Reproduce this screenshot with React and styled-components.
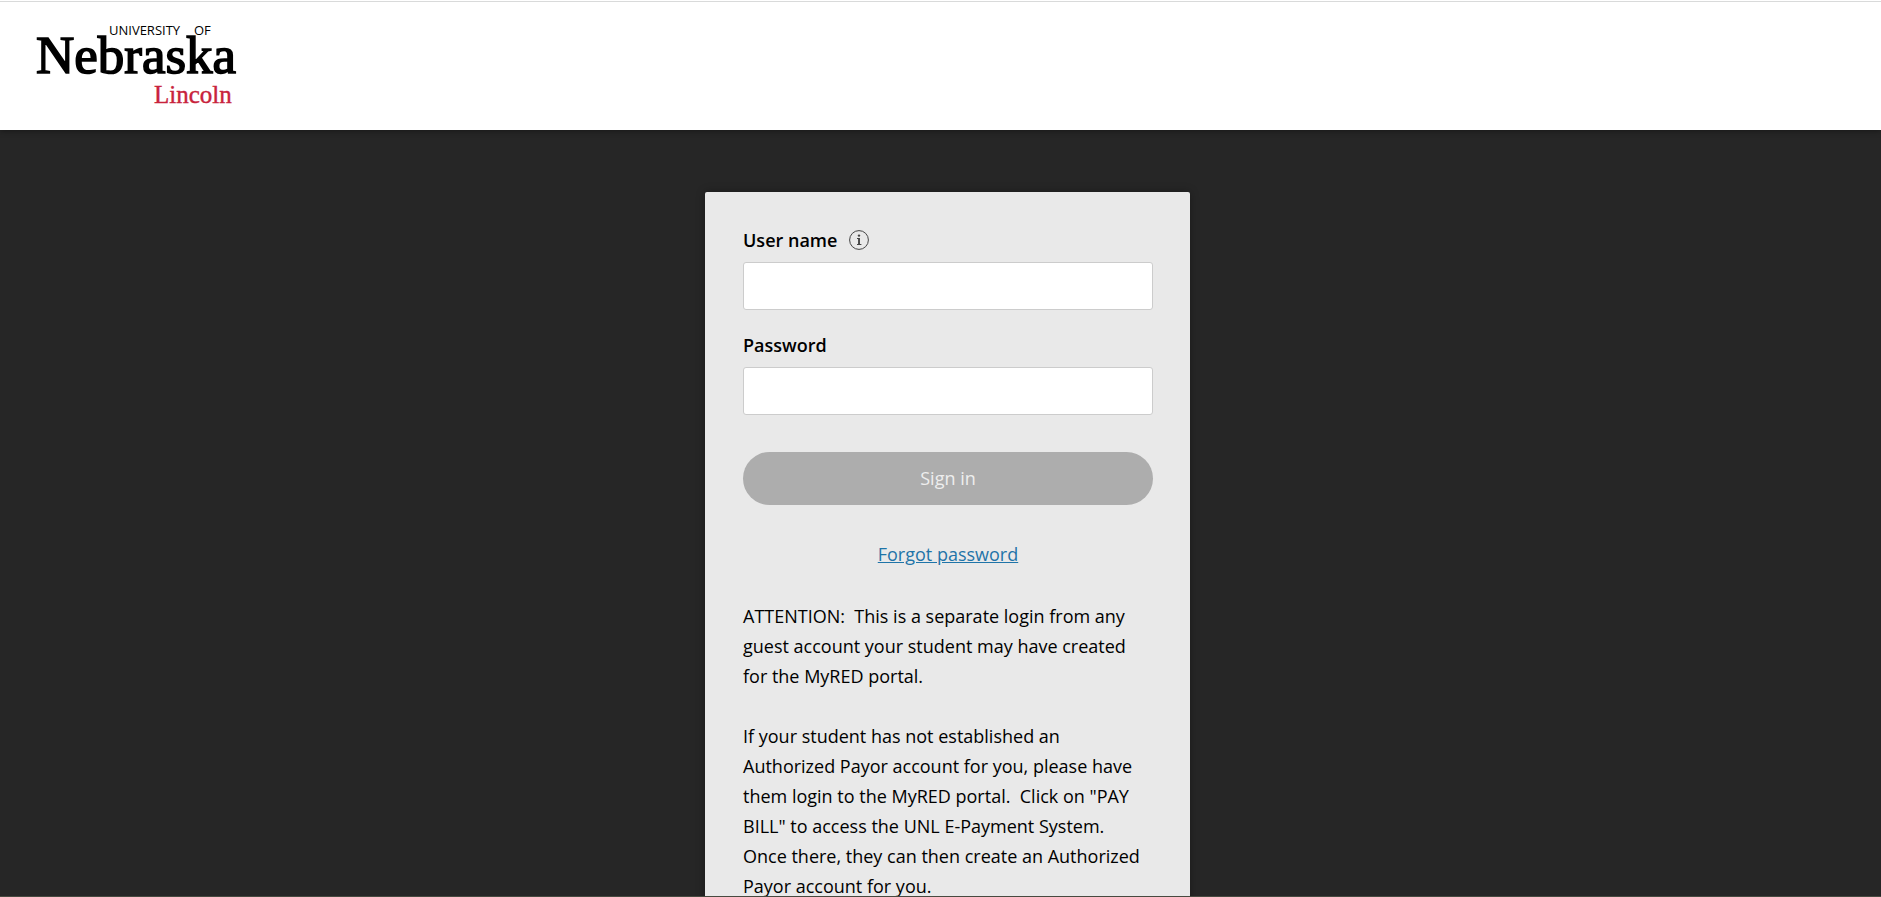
import React, { useState } from 'react';
import styled, { createGlobalStyle } from 'styled-components';

const GlobalStyle = createGlobalStyle`
    * {
        box-sizing: border-box;
    }

    body {
        margin: 0;
        background: #262626;
        color: #000;
        font-family: "Open Sans", sans-serif;
        font-size: 18px;
        font-weight: 500;
        line-height: 30px;
    }
`

const Page = styled.div`
    height: 100vh;
    display: flex;
    flex-direction: column;
    border-top: 1px solid #fff;
    border-bottom: 1px solid #474a40;
    overflow: hidden;
`

const Header = styled.header`
    flex: none;
    padding: 16px 32px;
    background: #fff;
    border-top: 1px solid #d9dada;
    box-shadow: 0 1px 6px rgba(0, 0, 0, 0.4);
`

const LogoLink = styled.a`
    display: block;
    width: 208px;
`

const LogoSvg = styled.svg`
    display: block;
    width: 100%;
    height: 96px;
`

const Main = styled.main`
    flex: 1;
    min-height: 0;
    display: flex;
    justify-content: center;
    align-items: flex-start;
    padding: 62px 0 0 14px;
`

const Card = styled.form`
    width: 485px;
    max-width: 100%;
    padding: 33px 37px 48px 38px;
    background: #e9e9e9;
    border-radius: 2px;
    box-shadow: 0 0 10px rgba(0, 0, 0, 0.3);
`

const Field = styled.div`
    margin-bottom: 20px;
`

const LabelRow = styled.div`
    display: flex;
    align-items: center;
    gap: 12px;
    margin-bottom: 7px;
`

const Label = styled.label`
    font-weight: 600;
    font-size: 18px;
`

const InfoButton = styled.button`
    display: flex;
    padding: 0;
    border: none;
    background: none;
    cursor: pointer;
`

const Input = styled.input`
    display: block;
    width: 100%;
    height: 48px;
    padding: 0 12px;
    border: 1px solid #ccc;
    border-radius: 3px;
    background: #fff;
    font: inherit;
`

const SignInButton = styled.button`
    display: block;
    width: 100%;
    height: 53px;
    margin-top: 37px;
    padding: 0 0 2px;
    border: none;
    border-radius: 27px;
    background: ${({ $ready }) => ($ready ? '#1f74a8' : '#adadad')};
    color: ${({ $ready }) => ($ready ? '#fff' : '#eee')};
    font: inherit;
    font-weight: 400;
`

const Forgot = styled.div`
    margin: 34px 0 32px;
    text-align: center;
`

const ForgotLink = styled.a`
    color: #1f74a8;
`

const Notice = styled.p`
    margin: 0 0 30px;
    padding-right: 8px;
    white-space: pre-wrap;
`

const Logo = () => (
    <LogoSvg viewBox="0 0 208 96" role="img" aria-label="University of Nebraska Lincoln">
        <text x="77" y="17" fontFamily="'Open Sans', sans-serif" fontSize="13">UNIVERSITY</text>
        <text x="162" y="17" fontFamily="'Open Sans', sans-serif" fontSize="13">OF</text>
        <text x="4" y="55" fontFamily="'Liberation Serif', serif" fontSize="53" stroke="#000" strokeWidth="1.6">Nebraska</text>
        <text x="122" y="85" fontFamily="'Liberation Serif', serif" fontSize="25" fill="#c8233c" stroke="#c8233c" strokeWidth="0.4">Lincoln</text>
    </LogoSvg>
)

const InfoIcon = () => (
    <svg width="20" height="20" viewBox="0 0 20 20" fill="none">
        <circle cx="10" cy="10" r="9.4" stroke="#444" strokeWidth="1" />
        <path d="M8 8.5h2.2v6M8 14.5h4.4" stroke="#444" strokeWidth="1" />
        <path d="M10 8v6.5" stroke="#444" strokeWidth="1.8" />
        <circle cx="10" cy="5.6" r="1.2" fill="#444" />
    </svg>
)

const App = () => {
    const [username, setUsername] = useState('');
    const [password, setPassword] = useState('');
    const ready = username !== '' && password !== '';

    return (
        <>
            <GlobalStyle />
            <Page>
                <Header>
                    <LogoLink href="#"><Logo /></LogoLink>
                </Header>
                <Main>
                    <Card onSubmit={(e) => e.preventDefault()}>
                        <Field>
                            <LabelRow>
                                <Label htmlFor="username">User name</Label>
                                <InfoButton type="button" aria-label="User name help"><InfoIcon /></InfoButton>
                            </LabelRow>
                            <Input id="username" type="text" value={username} onChange={(e) => setUsername(e.target.value)} />
                        </Field>
                        <Field>
                            <LabelRow>
                                <Label htmlFor="password">Password</Label>
                            </LabelRow>
                            <Input id="password" type="password" value={password} onChange={(e) => setPassword(e.target.value)} />
                        </Field>
                        <SignInButton type="submit" disabled={!ready} $ready={ready}>Sign in</SignInButton>
                        <Forgot>
                            <ForgotLink href="#">Forgot password</ForgotLink>
                        </Forgot>
                        <Notice>{'ATTENTION:  This is a separate login from any guest account your student may have created for the MyRED portal.'}</Notice>
                        <Notice>{'If your student has not established an Authorized Payor account for you, please have them login to the MyRED portal.  Click on "PAY BILL" to access the UNL E-Payment System. Once there, they can then create an Authorized Payor account for you.'}</Notice>
                    </Card>
                </Main>
            </Page>
        </>
    )
}

export default App
